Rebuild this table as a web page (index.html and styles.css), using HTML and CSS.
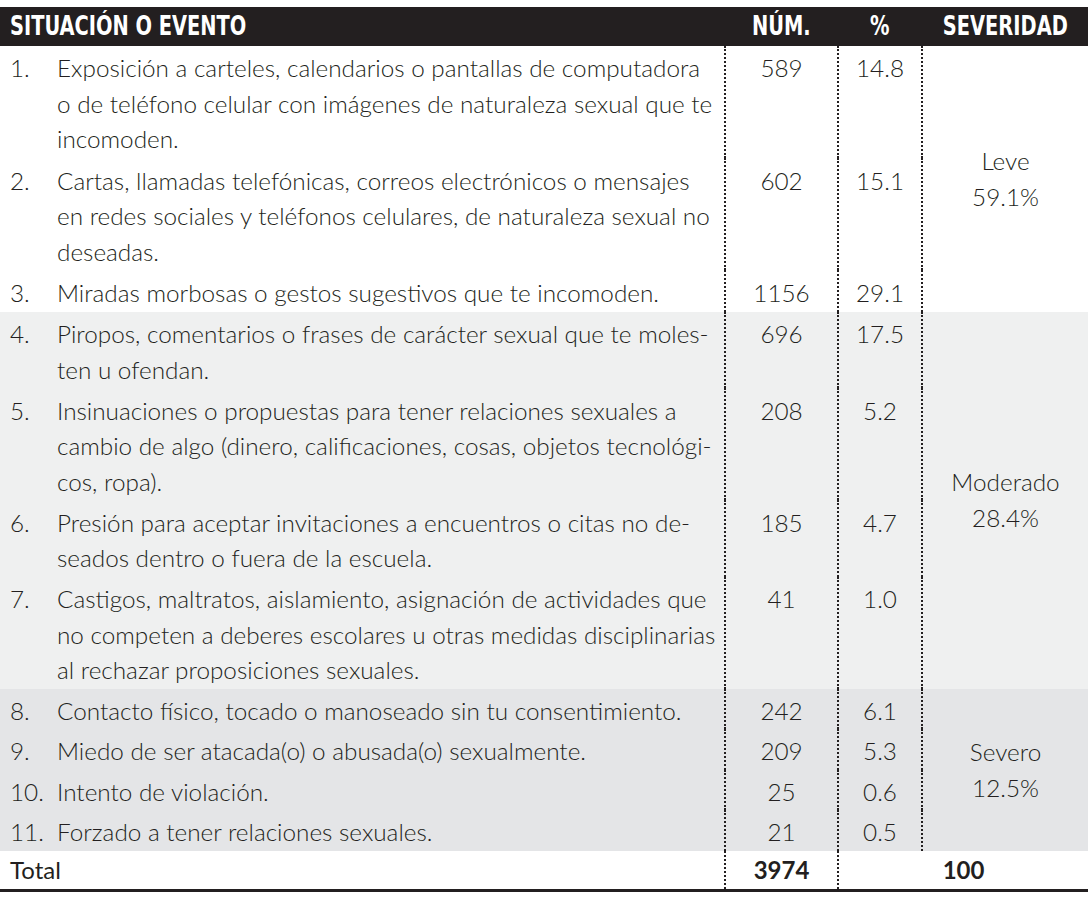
FILE: index.html
```html
<!DOCTYPE html>
<html lang="es">
<head>
<meta charset="utf-8">
<title>Situación o evento</title>
<link rel="stylesheet" href="styles.css">
</head>
<body>
<table class="tbl">
  <colgroup>
    <col class="c-idx"><col class="c-txt"><col class="c-num"><col class="c-pct"><col class="c-sev">
  </colgroup>
  <thead>
    <tr class="head">
      <th colspan="2" class="h-left"><span class="cond left">SITUACIÓN O EVENTO</span></th>
      <th><span class="cond">NÚM.</span></th>
      <th><span class="cond">%</span></th>
      <th><span class="cond">SEVERIDAD</span></th>
    </tr>
  </thead>
  <tbody>
    <tr class="r-leve first">
      <td class="idx">1.</td>
      <td class="txt">Exposición a carteles, calendarios o pantallas de computadora<br>o de teléfono celular con imágenes de naturaleza sexual que te<br>incomoden.</td>
      <td class="num dot">589</td>
      <td class="num dot">14.8</td>
      <td class="sev dot" rowspan="3">Leve<br>59.1%</td>
    </tr>
    <tr class="r-leve">
      <td class="idx">2.</td>
      <td class="txt">Cartas, llamadas telefónicas, correos electrónicos o mensajes<br>en redes sociales y teléfonos celulares, de naturaleza sexual no<br>deseadas.</td>
      <td class="num dot">602</td>
      <td class="num dot">15.1</td>
    </tr>
    <tr class="r-leve">
      <td class="idx">3.</td>
      <td class="txt">Miradas morbosas o gestos sugestivos que te incomoden.</td>
      <td class="num dot">1156</td>
      <td class="num dot">29.1</td>
    </tr>
    <tr class="r-mod">
      <td class="idx">4.</td>
      <td class="txt">Piropos, comentarios o frases de carácter sexual que te moles-<br>ten u ofendan.</td>
      <td class="num dot">696</td>
      <td class="num dot">17.5</td>
      <td class="sev dot" rowspan="4">Moderado<br>28.4%</td>
    </tr>
    <tr class="r-mod">
      <td class="idx">5.</td>
      <td class="txt">Insinuaciones o propuestas para tener relaciones sexuales a<br>cambio de algo (dinero, calificaciones, cosas, objetos tecnológi-<br>cos, ropa).</td>
      <td class="num dot">208</td>
      <td class="num dot">5.2</td>
    </tr>
    <tr class="r-mod">
      <td class="idx">6.</td>
      <td class="txt">Presión para aceptar invitaciones a encuentros o citas no de-<br>seados dentro o fuera de la escuela.</td>
      <td class="num dot">185</td>
      <td class="num dot">4.7</td>
    </tr>
    <tr class="r-mod">
      <td class="idx">7.</td>
      <td class="txt">Castigos, maltratos, aislamiento, asignación de actividades que<br>no competen a deberes escolares u otras medidas disciplinarias<br>al rechazar proposiciones sexuales.</td>
      <td class="num dot">41</td>
      <td class="num dot">1.0</td>
    </tr>
    <tr class="r-sev">
      <td class="idx">8.</td>
      <td class="txt">Contacto físico, tocado o manoseado sin tu consentimiento.</td>
      <td class="num dot">242</td>
      <td class="num dot">6.1</td>
      <td class="sev dot" rowspan="4">Severo<br>12.5%</td>
    </tr>
    <tr class="r-sev">
      <td class="idx">9.</td>
      <td class="txt">Miedo de ser atacada(o) o abusada(o) sexualmente.</td>
      <td class="num dot">209</td>
      <td class="num dot">5.3</td>
    </tr>
    <tr class="r-sev">
      <td class="idx">10.</td>
      <td class="txt">Intento de violación.</td>
      <td class="num dot">25</td>
      <td class="num dot">0.6</td>
    </tr>
    <tr class="r-sev">
      <td class="idx">11.</td>
      <td class="txt">Forzado a tener relaciones sexuales.</td>
      <td class="num dot">21</td>
      <td class="num dot">0.5</td>
    </tr>
  </tbody>
  <tfoot>
    <tr class="total">
      <td colspan="2" class="t-label">Total</td>
      <td class="num dot t-strong">3974</td>
      <td colspan="2" class="num dot t-strong">100</td>
    </tr>
  </tfoot>
</table>
</body>
</html>
```
FILE: styles.css
```css
html, body {
  margin: 0;
  padding: 0;
  background: #ffffff;
}

body {
  padding-top: 7px;
  font-family: Lato, "Open Sans", sans-serif;
  color: #231f20;
}

.tbl {
  width: 1088px;
  border-collapse: collapse;
  table-layout: fixed;
}

.c-idx { width: 57px; }
.c-txt { width: 668px; }
.c-num { width: 113px; }
.c-pct { width: 84px; }
.c-sev { width: 166px; }

.head th {
  background: #231f20;
  color: #ffffff;
  font-family: "DejaVu Sans Condensed", "DejaVu Sans", sans-serif;
  font-stretch: condensed;
  font-weight: 700;
  font-size: 26px;
  height: 39px;
  padding: 0;
  line-height: 39px;
  text-align: center;
  white-space: nowrap;
}

.head th.h-left {
  text-align: left;
  padding-left: 10px;
}

.cond {
  display: inline-block;
  transform: scaleX(0.83);
  transform-origin: center;
}

.cond.left {
  transform-origin: left center;
}

tbody td {
  font-weight: 300;
  font-size: 24.3px;
  line-height: 35.5px;
  padding: 5px 0 1px;
  vertical-align: top;
}

.r-leve td { background: #ffffff; }
.r-mod td { background: #eff0f0; padding-top: 4.5px; }
.r-sev td { background: #e4e5e7; padding-top: 4px; }

.first td { padding-top: 4px; }

.idx {
  padding-left: 10px !important;
  white-space: nowrap;
}

.txt {
  white-space: nowrap;
}

.num {
  text-align: center;
}

.dot {
  border-left: 2px dotted #231f20;
}

tbody td.sev {
  text-align: center;
  vertical-align: middle;
  line-height: 36px;
  padding: 0;
}

.total td {
  font-size: 24px;
  line-height: 28px;
  height: 38px;
  padding: 0;
  vertical-align: middle;
  border-bottom: 3px solid #231f20;
  background: #ffffff;
}

.t-label {
  padding-left: 10px !important;
  font-weight: 400;
}

.t-strong {
  font-weight: 700;
}
```
